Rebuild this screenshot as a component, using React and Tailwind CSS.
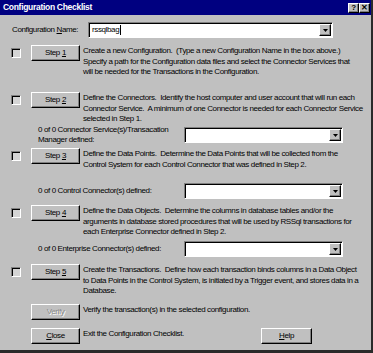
import React from "react";

const raised =
  "border border-t-white border-l-white border-b-black border-r-black shadow-[inset_-1px_-1px_0_#808080]";
const sunken =
  "border border-t-[#808080] border-l-[#808080] border-b-white border-r-white shadow-[inset_1px_1px_0_#000]";

function DropArrow() {
  return (
    <div className={`w-[12px] h-full bg-[#c0c0c0] flex items-center justify-center ${raised}`}>
      <svg width="5" height="3" viewBox="0 0 5 3">
        <path d="M0 0h5L2.5 3z" fill="#000" />
      </svg>
    </div>
  );
}

function Combo({ width, value, cursor }) {
  return (
    <div className={`h-[16px] bg-white flex items-stretch p-[1px] ${sunken} ${width}`}>
      <div className="flex-1 flex items-center pl-[2px] overflow-hidden">
        {value}
        {cursor && <span className="w-[1px] h-[10px] bg-black ml-[1px]" />}
      </div>
      <DropArrow />
    </div>
  );
}

function Button({ children, width = "w-[49px]", disabled }) {
  return (
    <div
      className={`h-[16px] shrink-0 bg-[#c0c0c0] flex items-center justify-center ${raised} ${width} ${
        disabled ? "text-[#8a8a8a] [text-shadow:1px_1px_0_#fff]" : ""
      }`}
    >
      {children}
    </div>
  );
}

function Checkbox() {
  return <div className={`w-[10px] h-[10px] mt-[3px] shrink-0 bg-[#d4d4d4] ${sunken}`} />;
}

function StepRow({ n, lines, height, top = "" }) {
  return (
    <div className={`flex items-start pl-[11px] ${height} ${top}`}>
      <Checkbox />
      <div className="ml-[10px]">
        <Button>
          Step <span className="underline ml-[2px]">{n}</span>
        </Button>
      </div>
      <div className="ml-[3px] mt-[1px]">
        {lines.map((l, i) => (
          <div key={i} className="whitespace-pre">
            {l}
          </div>
        ))}
      </div>
    </div>
  );
}

function SubRow({ label, top = "" }) {
  return (
    <div className={`flex items-center h-[16px] ${top}`}>
      <div className="ml-[38px] w-[146px] leading-[10px]">{label}</div>
      <Combo width="w-[159px]" />
    </div>
  );
}

export default function App() {
  return (
    <div className="w-[373px] h-[353px] overflow-hidden bg-[#c0c0c0] text-black font-['Liberation_Sans',Arial,sans-serif] text-[8px] leading-[10.5px] tracking-[-0.38px] border-r-2 border-b-[3px] border-[#2a2a2a] flex flex-col">
      {/* title bar */}
      <div className="h-[15px] shrink-0 bg-[#000080] flex items-center pl-[3px] pr-[1px]">
        <span className="flex-1 text-white font-bold text-[8.5px] tracking-[-0.3px]">Configuration Checklist</span>
        <div className="flex">
          <div className={`w-[11px] h-[10px] bg-[#c0c0c0] flex items-center justify-center font-bold text-[8px] leading-none ${raised}`}>
            ?
          </div>
          <div className={`w-[11px] h-[10px] bg-[#c0c0c0] flex items-center justify-center font-bold text-[8px] leading-none ${raised}`}>
            ✕
          </div>
        </div>
      </div>

      {/* configuration name */}
      <div className="mt-[7px] h-[16px] flex items-center shrink-0">
        <div className="ml-[12px] w-[76px]">
          Configuration <span className="underline">N</span>ame:
        </div>
        <Combo width="w-[245px]" value="rssqlbag" cursor />
      </div>

      <StepRow
        n="1"
        top="mt-[7px]"
        height="h-[47px]"
        lines={[
          "Create a new Configuration.  (Type a new Configuration Name in the box above.)",
          "Specify a path for the Configuration data files and select the Connector Services that",
          "will be needed for the Transactions in the Configuration.",
        ]}
      />
      <StepRow
        n="2"
        height="h-[35px]"
        lines={[
          "Define the Connectors.  Identify the host computer and user account that will run each",
          "Connector Service.  A minimum of one Connector is needed for each Connector Service",
          "selected in Step 1.",
        ]}
      />
      <SubRow
        label={
          <>
            0 of 0 Connector Service(s)/Transacation
            <br />
            Manager defined:
          </>
        }
      />
      <StepRow
        n="3"
        top="mt-[5px]"
        height="h-[35px]"
        lines={[
          "Define the Data Points.  Determine the Data Points that will be collected from the",
          "Control System for each Control Connector that was defined in Step 2.",
        ]}
      />
      <SubRow label="0 of 0 Control Connector(s) defined:" />
      <StepRow
        n="4"
        top="mt-[6px]"
        height="h-[36px]"
        lines={[
          "Define the Data Objects.  Determine the columns in database tables and/or the",
          "arguments in database stored procedures that will be used by RSSql transactions for",
          "each Enterprise Connector defined in Step 2.",
        ]}
      />
      <SubRow label="0 of 0 Enterprise Connector(s) defined:" />
      <StepRow
        n="5"
        top="mt-[7px]"
        height="h-[40px]"
        lines={[
          "Create the Transactions.  Define how each transaction binds columns in a Data Object",
          "to Data Points in the Control System, is initiated by a Trigger event, and stores data in a",
          "Database.",
        ]}
      />

      {/* verify */}
      <div className="h-[24px] flex items-start pl-[31px] shrink-0">
        <Button disabled>Verify</Button>
        <div className="ml-[3px] mt-[1px]">Verify the transaction(s) in the selected configuration.</div>
      </div>

      {/* close / help */}
      <div className="h-[16px] flex items-start pl-[31px] shrink-0">
        <Button>
          <span className="underline">C</span>lose
        </Button>
        <div className="ml-[3px] mt-[1px] w-[178px]">Exit the Configuration Checklist.</div>
        <Button width="w-[51px]">
          <span className="underline">H</span>elp
        </Button>
      </div>
    </div>
  );
}
